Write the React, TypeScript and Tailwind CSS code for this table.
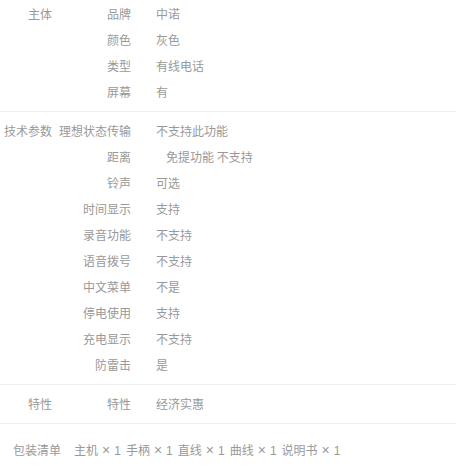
const groups: { title: string; rows: [string, string][] }[] = [
  {
    title: "主体",
    rows: [
      ["品牌", "中诺"],
      ["颜色", "灰色"],
      ["类型", "有线电话"],
      ["屏幕", "有"],
    ],
  },
  {
    title: "技术参数",
    rows: [
      ["理想状态传输", "不支持此功能"],
      ["距离", "免提功能 不支持"],
      ["铃声", "可选"],
      ["时间显示", "支持"],
      ["录音功能", "不支持"],
      ["语音拨号", "不支持"],
      ["中文菜单", "不是"],
      ["停电使用", "支持"],
      ["充电显示", "不支持"],
      ["防雷击", "是"],
    ],
  },
  {
    title: "特性",
    rows: [["特性", "经济实惠"]],
  },
];

export default function App() {
  return (
    <div
      className="w-[456px] h-[468px] bg-white text-[12px] text-[#999] overflow-hidden"
      style={{ fontFamily: '"Microsoft YaHei", "Noto Sans CJK SC", sans-serif' }}
    >
      {groups.map((g, gi) => (
        <div
          key={g.title}
          className={`flex border-b border-[#eee] pb-[6px] ${gi === 0 ? "pt-[1px]" : "pt-[6px]"}`}
        >
          <div className="w-[52px] shrink-0 text-right leading-[26px]">{g.title}</div>
          <div className="flex-1">
            {g.rows.map(([k, v]) => (
              <div key={k} className="flex h-[26px] items-center leading-[26px]">
                <div className="w-[79px] shrink-0 text-right">{k}</div>
                <div className={`ml-[25px] whitespace-pre ${k === "距离" ? "pl-[10px]" : ""}`}>{v}</div>
              </div>
            ))}
          </div>
        </div>
      ))}
      <div className="flex items-baseline pl-[13px] pt-[13px] leading-[26px]">
        <div>包装清单</div>
        <div className="ml-[13px] flex items-baseline gap-[5px]">
          {["主机", "手柄", "直线", "曲线", "说明书"].map((item) => (
            <span key={item} className="flex items-baseline">
              <span>{item}</span>
              <span className="ml-[4px] text-[14px] font-['Liberation_Sans',sans-serif]">×</span>
              <span className="ml-[4px] font-['Liberation_Sans',sans-serif]">1</span>
            </span>
          ))}
        </div>
      </div>
    </div>
  );
}
